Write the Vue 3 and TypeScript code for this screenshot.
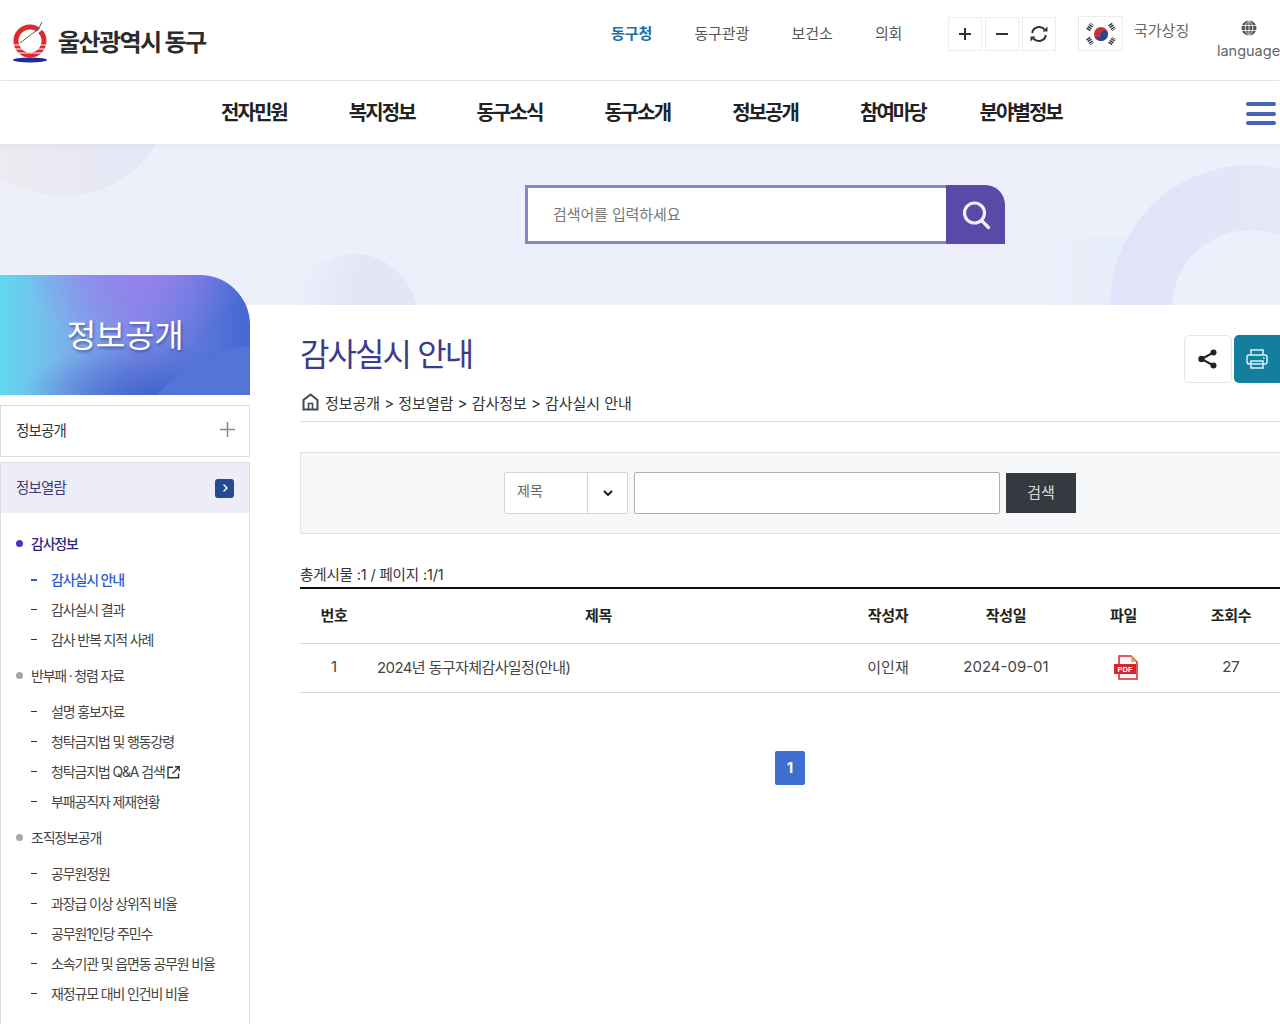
<template>
  <div class="page">
    <header class="top">
      <a class="logo">
        <svg width="36" height="44" viewBox="0 0 36 44">
          <circle cx="17" cy="21" r="14" fill="none" stroke="#dd2a2e" stroke-width="5" />
          <path d="M0 25h34M1 29h32M3 33h28" stroke="#fff" stroke-width="1" />
          <path d="M8 22 L21 12 L26 9 L30 1 L29 10 L24 14 L18 15 Z" fill="#fff" />
          <path d="M7 23 L20 13 L25 10 L29 2" fill="none" stroke="#333" stroke-width=".8" />
          <ellipse cx="17" cy="40" rx="17" ry="2.4" fill="#1b2f9c" />
        </svg>
        <span>울산광역시 동구</span>
      </a>
      <nav class="util">
        <a v-for="(u, i) in utils" :key="u" :class="{ on: i === 0 }">{{ u }}</a>
      </nav>
      <div class="zoom-btns">
        <button class="zbtn">
          <svg width="14" height="14" viewBox="0 0 14 14"><path d="M7 1v12M1 7h12" stroke="#333" stroke-width="2" /></svg>
        </button>
        <button class="zbtn">
          <svg width="14" height="14" viewBox="0 0 14 14"><path d="M1 7h12" stroke="#333" stroke-width="2" /></svg>
        </button>
        <button class="zbtn">
          <svg width="20" height="20" viewBox="0 0 20 20" fill="none" stroke="#333" stroke-width="2">
            <path d="M3.2 9A7 7 0 0 1 15.5 5.5" />
            <path d="M16.8 11A7 7 0 0 1 4.5 14.5" />
            <path d="M13.5 7.5h5v-5z" fill="#333" stroke="none" />
            <path d="M6.500 12.500h-5v5z" fill="#333" stroke="none" />
          </svg>
        </button>
      </div>
      <div class="flag-box">
        <svg width="32" height="26" viewBox="0 0 32 26">
          <circle cx="16" cy="13" r="7" fill="#c9303e" />
          <path d="M9 13a3.500 3.500 0 0 0 7 0a3.500 3.500 0 0 1 7 0a7 7 0 0 1-14 0z" fill="#1f4a9a" />
          <g stroke="#333" stroke-width="4.500" stroke-dasharray="1.400 .8">
            <path d="M3 9l4-6" /><path d="M25 3l4 6" /><path d="M3 17l4 6" /><path d="M25 23l4-6" />
          </g>
        </svg>
      </div>
      <a class="symbol">국가상징</a>
      <a class="lang">
        <svg width="16" height="16" viewBox="0 0 16 16" fill="none">
          <circle cx="8" cy="8" r="7.500" fill="#555" />
          <path d="M0 5.500h16M0 10.500h16M8 0v16M8 .5C3 4 3 12 8 15.500M8 .5c5 3.500 5 11.500 0 15" stroke="#fff" stroke-width=".8" />
        </svg>
        <span>language</span>
      </a>
    </header>

    <nav class="gnb">
      <div class="gnb-items">
        <a v-for="m in gnb" :key="m">{{ m }}</a>
      </div>
      <button class="burger"><i></i><i></i><i></i></button>
    </nav>

    <section class="hero">
      <span class="deco deco-a"></span>
      <span class="deco deco-b"></span>
      <span class="deco deco-c"></span>
      <span class="deco deco-d"></span>
      <span class="deco deco-e"></span>
      <div class="search">
        <div class="search-field">검색어를 입력하세요</div>
        <button class="search-btn">
          <svg width="30" height="30" viewBox="0 0 30 30" fill="none" stroke="#f1effa" stroke-width="3.200">
            <circle cx="13.500" cy="13" r="10" />
            <path d="M20.500 20.500l7 7" stroke-linecap="round" />
          </svg>
        </button>
      </div>
    </section>

    <div class="body">
      <aside class="side">
        <div class="side-title"><h2>정보공개</h2></div>
        <div class="side-item">
          <span>정보공개</span>
          <svg class="plus" width="15" height="15" viewBox="0 0 15 15"><path d="M7.500 0v15M0 7.500h15" stroke="#888" stroke-width="1.500" /></svg>
        </div>
        <div class="side-item active">
          <span>정보열람</span>
          <i class="chev">
            <svg width="10" height="10" viewBox="0 0 10 10" fill="none"><path d="M3.500 1.500L7 5L3.500 8.500" stroke="#fff" stroke-width="1.400" /></svg>
          </i>
        </div>
        <div class="side-tree">
          <template v-for="g in tree" :key="g.name">
            <div class="tree-head" :class="{ on: g.on }">{{ g.name }}</div>
            <div
              v-for="c in g.items"
              :key="c.name"
              class="tree-leaf"
              :class="{ on: c.on }"
            >
              {{ c.name }}
              <svg v-if="c.ext" class="ext" width="13" height="13" viewBox="0 0 13 13" fill="none" stroke="#333" stroke-width="1.400">
                <path d="M6 1.200H1v10.600h10.600V7.500" />
                <path d="M5.500 7.500L12 1M8 .8h4.200V5" />
              </svg>
            </div>
          </template>
        </div>
      </aside>

      <main class="main">
        <div class="title-row">
          <h1>감사실시 안내</h1>
          <div class="title-btns">
            <button class="share">
              <svg width="20" height="20" viewBox="0 0 20 20" fill="#222">
                <circle cx="15.500" cy="3.500" r="3" /><circle cx="15.500" cy="16.500" r="3" /><circle cx="3.500" cy="10" r="3.200" />
                <path d="M15.500 3.500L3.500 10l12 6.500" fill="none" stroke="#222" stroke-width="2" />
              </svg>
            </button>
            <button class="print">
              <svg width="22" height="20" viewBox="0 0 22 20" fill="none" stroke="#d8f4fa" stroke-width="1.500">
                <path d="M5 6V1h12v5" />
                <rect x="1" y="6" width="20" height="9" rx="2" />
                <path d="M5 12v7h12v-7zM5 14.500H1" />
                <path d="M17 9h1.500" />
              </svg>
            </button>
          </div>
        </div>
        <div class="crumb">
          <svg width="17" height="18" viewBox="0 0 17 18" fill="none" stroke="#3d4a55" stroke-width="2">
            <path d="M1.500 16.500V7L8.500 1.500L15.500 7v9.500z" />
            <path d="M6.500 16.500v-6h4v6" stroke-width="1.600" />
          </svg>
          <span>정보공개 &gt; 정보열람 &gt; 감사정보 &gt; 감사실시 안내</span>
        </div>

        <form class="filter" @submit.prevent>
          <div class="select">
            <span class="select-val">제목</span>
            <span class="select-arrow">
              <svg width="10" height="8" viewBox="0 0 10 8" fill="none"><path d="M1 2l4 4l4-4" stroke="#111" stroke-width="1.800" /></svg>
            </span>
          </div>
          <div class="field"></div>
          <button class="go">검색</button>
        </form>

        <p class="count">총게시물 :1 / 페이지 :1/1</p>
        <table class="board">
          <colgroup>
            <col class="c-no" /><col /><col class="c-118" /><col class="c-118" /><col class="c-file" /><col class="c-hits" />
          </colgroup>
          <thead>
            <tr><th>번호</th><th>제목</th><th>작성자</th><th>작성일</th><th>파일</th><th>조회수</th></tr>
          </thead>
          <tbody>
            <tr v-for="r in rows" :key="r.no">
              <td>{{ r.no }}</td>
              <td class="subject">{{ r.title }}</td>
              <td>{{ r.writer }}</td>
              <td>{{ r.date }}</td>
              <td>
                <svg class="pdf" width="26" height="25" viewBox="0 0 26 25">
                  <path d="M6 1h12l6 6v17H6z" fill="#fdf3f3" stroke="#d3272b" stroke-width="1.500" />
                  <path d="M18 1v6h6z" fill="#e8b04a" />
                  <rect x="1" y="9" width="22" height="10" fill="#d3272b" />
                  <text x="12" y="17" class="pdf-txt">PDF</text>
                </svg>
              </td>
              <td>{{ r.hits }}</td>
            </tr>
          </tbody>
        </table>
        <div class="paging"><a class="cur">1</a></div>
      </main>
    </div>
  </div>
</template>

<script setup lang="ts">
interface Leaf {
  name: string
  on?: boolean
  ext?: boolean
}

const utils = ['동구청', '동구관광', '보건소', '의회']
const gnb = ['전자민원', '복지정보', '동구소식', '동구소개', '정보공개', '참여마당', '분야별정보']

const tree: { name: string; on?: boolean; items: Leaf[] }[] = [
  {
    name: '감사정보',
    on: true,
    items: [{ name: '감사실시 안내', on: true }, { name: '감사실시 결과' }, { name: '감사 반복 지적 사례' }]
  },
  {
    name: '반부패 · 청렴 자료',
    items: [
      { name: '설명 홍보자료' },
      { name: '청탁금지법 및 행동강령' },
      { name: '청탁금지법 Q&A 검색', ext: true },
      { name: '부패공직자 제재현황' }
    ]
  },
  {
    name: '조직정보공개',
    items: [
      { name: '공무원정원' },
      { name: '과장급 이상 상위직 비율' },
      { name: '공무원1인당 주민수' },
      { name: '소속기관 및 읍면동 공무원 비율' },
      { name: '재정규모 대비 인건비 비율' }
    ]
  }
]

const rows = [{ no: 1, title: '2024년 동구자체감사일정(안내)', writer: '이인재', date: '2024-09-01', hits: 27 }]
</script>

<style>
html,
body {
  margin: 0;
  background: #fff;
}
</style>

<style scoped>
.page {
  width: 1280px;
  height: 1024px;
  overflow: hidden;
  font-family: Inter, "Noto Sans CJK KR", "Noto Sans", sans-serif;
  color: #333;
}

a { display: block; }
button {
  padding: 0;
  font: inherit;
  cursor: pointer;
}

/* 상단 */
.top {
  height: 80px;
  border-bottom: 1px solid #e6e6e6;
  display: flex;
  align-items: flex-start;
  box-sizing: content-box;
}
.logo {
  display: flex;
  align-items: center;
  width: 611px;
  flex: none;
  padding: 20px 0 0 13px;
  box-sizing: border-box;
  gap: 9px;
}
.logo span {
  position: relative;
  top: 1px;
  font-size: 24px;
  font-weight: 700;
  letter-spacing: -1.600px;
  color: #2b2b2b;
  line-height: 44px;
}
.util {
  display: flex;
  gap: 42.300px;
  width: 337px;
  flex: none;
  padding-top: 22px;
  font-size: 15px;
  line-height: 24px;
  letter-spacing: -.1px;
  color: #555;
}
.util .on {
  color: #1a6fa8;
  font-weight: 700;
}
.zoom-btns {
  display: flex;
  gap: 3px;
  padding-top: 17px;
  width: 130px;
  flex: none;
}
.zbtn {
  width: 34px;
  height: 34px;
  border: 1px solid #ececec;
  background: #fff;
  display: flex;
  align-items: center;
  justify-content: center;
}
.flag-box {
  width: 45px;
  height: 35px;
  flex: none;
  margin-top: 16px;
  border: 1px solid #ececec;
  box-sizing: border-box;
  display: flex;
  align-items: center;
  justify-content: center;
}
.symbol {
  margin: 19px 0 0 11px;
  font-size: 15px;
  line-height: 24px;
  color: #666;
  flex: none;
}
.lang {
  margin-left: auto;
  margin-top: 20px;
  width: 63px;
  flex: none;
  display: flex;
  flex-direction: column;
  align-items: center;
  font-size: 14.500px;
  line-height: 20px;
  color: #666;
}
.lang span { margin-top: 5px; }

/* 대메뉴 */
.gnb {
  height: 63px;
  position: relative;
  z-index: 2;
  box-shadow: 0 2px 5px rgba(120, 120, 150, .08);
  background: #fff;
}
.gnb-items {
  display: flex;
  padding-left: 190px;
  height: 61px;
  align-items: center;
}
.gnb-items a {
  width: 127.800px;
  text-align: center;
  font-size: 20px;
  font-weight: 700;
  letter-spacing: -1.950px;
  color: #222;
  flex: none;
}
.burger {
  position: absolute;
  right: 4px;
  top: 21px;
  width: 30px;
  height: 23px;
  border: 0;
  background: none;
  display: flex;
  flex-direction: column;
  justify-content: space-between;
}
.burger i {
  display: block;
  height: 4px;
  width: 30px;
  border-radius: 2px;
  background: #4464b8;
}

/* 비주얼 */
.hero {
  position: relative;
  height: 161px;
  overflow: hidden;
  background: #edf0fb;
  padding: 41px 0 0 525px;
  box-sizing: border-box;
}
.deco {
  position: absolute;
  border-radius: 50%;
}
.deco-a {
  left: -40px;
  top: -130px;
  width: 205px;
  height: 182px;
  background: linear-gradient(90deg, #ebebf0 20%, #e6e7f5 80%);
}
.deco-b {
  left: 290px;
  top: 110px;
  width: 128px;
  height: 130px;
  background: linear-gradient(100deg, #edf0fb 5%, #e4e6f6 45%);
}
.deco-c {
  left: 1010px;
  top: 91px;
  width: 180px;
  height: 180px;
  background: linear-gradient(90deg, #edf0fb 0%, #e7edf9 60%);
}
.deco-d {
  left: 1110px;
  top: 21px;
  width: 280px;
  height: 280px;
  background: linear-gradient(90deg, #e2e3f8 20%, #e4e9f7 70%);
}
.deco-e {
  left: 1172px;
  top: 86px;
  width: 156px;
  height: 156px;
  background: #ebf0fb;
}
.search {
  position: relative;
  display: flex;
  width: 480px;
  height: 59px;
}
.search-field {
  width: 421px;
  box-sizing: border-box;
  border: 3px solid #8b82c9;
  border-right: 0;
  background: #fff;
  padding-left: 25px;
  font-size: 15px;
  line-height: 54px;
  letter-spacing: -.1px;
  color: #777;
}
.search-btn {
  width: 59px;
  height: 59px;
  border: 0;
  border-radius: 0 20px 0 0;
  background: #5b49a8;
  display: flex;
  align-items: center;
  justify-content: center;
}

/* 본문 */
.body {
  display: flex;
  align-items: flex-start;
}
.side {
  width: 250px;
  flex: none;
  margin-top: -30px;
  position: relative;
  z-index: 1;
}
.side-title {
  height: 120px;
  border-radius: 0 50px 0 0;
  overflow: hidden;
  position: relative;
  background:
    radial-gradient(circle at 270px 220px, #5474d8 0 150px, transparent 151px),
    radial-gradient(ellipse 130px 60px at 150px 125px, #3f62cc 0%, rgba(63, 98, 204, 0) 100%),
    radial-gradient(ellipse 110px 90px at 135px -10px, #9a80ee 0%, rgba(150, 128, 238, 0) 100%),
    linear-gradient(90deg, #62d8f0 0%, #7ab4ea 25%, #7a8ae4 55%, #4468d2 100%);
  display: flex;
  align-items: center;
  justify-content: center;
  margin-bottom: 10px;
}
.side-title h2 {
  margin: 2px 0 0;
  font-size: 32px;
  font-weight: 400;
  line-height: 1.2;
  color: #fff;
  letter-spacing: -.3px;
  text-shadow: 1px 2px 3px rgba(40, 50, 130, .6);
}
.side-item {
  height: 52px;
  box-sizing: border-box;
  border: 1px solid #ddd;
  padding: 0 15px 3px;
  display: flex;
  align-items: center;
  justify-content: space-between;
  font-size: 14.500px;
  letter-spacing: -.8px;
  color: #333;
}
.plus {
  margin: 0 -1px 1px 0;
}
.side-item.active {
  margin-top: 5px;
  height: 51px;
  background: #ecedf6;
  color: #3d3a78;
  border-bottom: 0;
}
.chev {
  width: 19px;
  height: 19px;
  margin-top: 3px;
  border-radius: 3px;
  background: #264a92;
  display: flex;
  align-items: center;
  justify-content: center;
}
.side-tree {
  border: 1px solid #ddd;
  border-width: 0 1px;
  padding-top: 13px;
  padding-bottom: 40px;
}
.tree-head {
  position: relative;
  height: 36px;
  line-height: 35px;
  padding-left: 30px;
  font-size: 14px;
  letter-spacing: -1.200px;
  color: #444;
}
.tree-head::before {
  content: "";
  position: absolute;
  left: 15px;
  top: 14px;
  width: 7px;
  height: 7px;
  border-radius: 50%;
  background: #a5a5ad;
}
.tree-head.on {
  color: #2e2484;
  font-weight: 500;
}
.tree-head.on::before { background: #4a2fc4; }
.tree-leaf {
  position: relative;
  height: 30px;
  line-height: 29px;
  padding-left: 50px;
  font-size: 14px;
  letter-spacing: -1.150px;
  color: #444;
}
.tree-head + .tree-leaf { margin-top: 3px; }
.tree-leaf + .tree-head { margin-top: 3px; }
.tree-leaf::before {
  content: "";
  position: absolute;
  left: 30px;
  top: 14px;
  width: 6px;
  height: 1px;
  background: #333;
}
.tree-leaf.on {
  color: #2a5cc8;
  font-weight: 500;
}
.tree-leaf.on::before {
  background: #2a5cc8;
  height: 2px;
}
.ext {
  vertical-align: -2px;
}

.main {
  flex: 1;
  margin-left: 50px;
  min-width: 0;
}
.title-row {
  height: 78px;
  padding-top: 30px;
  box-sizing: border-box;
  display: flex;
  justify-content: space-between;
}
.title-row h1 {
  margin: -4px 0 0;
  font-size: 32px;
  font-weight: 400;
  line-height: 48px;
  letter-spacing: -1.900px;
  color: #3e3a8c;
}
.title-btns {
  display: flex;
  gap: 2px;
}
.share,
.print {
  height: 48px;
  display: flex;
  align-items: center;
  justify-content: center;
}
.share {
  width: 48px;
  border: 1px solid #e6e6e6;
  border-radius: 5px;
  background: #fff;
}
.print {
  width: 46px;
  border: 0;
  border-radius: 5px 0 0 5px;
  background: #137f9d;
}
.crumb {
  height: 39px;
  border-bottom: 1px solid #ddd;
  display: flex;
  align-items: center;
  gap: 6px;
  padding-left: 2px;
  box-sizing: border-box;
  font-size: 15px;
  letter-spacing: -.03px;
  color: #333;
}
.filter {
  margin-top: 30px;
  height: 82px;
  box-sizing: border-box;
  background: #f5f7f9;
  border: 1px solid #e2e2e2;
  border-right: 0;
  display: flex;
  padding: 19px 0 0 203px;
  gap: 6px;
}
.select {
  width: 124px;
  height: 42px;
  box-sizing: border-box;
  border: 1px solid #d5d5d5;
  border-radius: 2px;
  background: #fff;
  display: flex;
}
.select-val {
  flex: 1;
  padding-left: 12px;
  font-size: 14px;
  line-height: 36px;
  color: #666;
}
.select-arrow {
  width: 39px;
  border-left: 1px solid #d5d5d5;
  display: flex;
  align-items: center;
  justify-content: center;
}
.field {
  width: 366px;
  height: 42px;
  box-sizing: border-box;
  border: 1px solid #b0b0b0;
  border-radius: 2px;
  background: #fff;
}
.go {
  width: 70px;
  height: 40px;
  margin-top: 1px;
  border: 0;
  padding-bottom: 3px;
  background: #343a40;
  color: #ddd;
  font-size: 15px;
}
.count {
  margin: 32px 0 0;
  height: 21px;
  font-size: 14.500px;
  line-height: 17px;
  letter-spacing: -.15px;
  color: #333;
}
.board {
  width: 100%;
  border-collapse: collapse;
  table-layout: fixed;
  border-top: 2px solid #111;
  font-size: 15px;
}
.c-no { width: 68px; }
.c-118 { width: 118px; }
.c-file { width: 117px; }
.c-hits { width: 98px; }
.board th {
  height: 51px;
  font-weight: 700;
  font-size: 15px;
  letter-spacing: -.3px;
  color: #222;
  border-bottom: 1px solid #d8d8d8;
  padding: 0 0 3px;
}
.board td {
  height: 45px;
  text-align: center;
  border-bottom: 1px solid #d8d8d8;
  padding: 0 0 3px;
  color: #444;
}
.board td.subject {
  text-align: left;
  padding-left: 9px;
  letter-spacing: -.6px;
}
.pdf {
  display: block;
  margin: 0 auto;
  position: relative;
  left: 2px;
  top: 1px;
}
.pdf-txt {
  font-family: "Liberation Sans", sans-serif;
  font-size: 7.500px;
  font-weight: 700;
  fill: #fff;
  text-anchor: middle;
}
.paging {
  margin-top: 58px;
  display: flex;
  justify-content: center;
}
.cur {
  width: 30px;
  height: 34px;
  border-radius: 2px;
  background: #3d6fd0;
  color: #fff;
  font-size: 15px;
  font-weight: 700;
  line-height: 33px;
  text-align: center;
}
</style>
